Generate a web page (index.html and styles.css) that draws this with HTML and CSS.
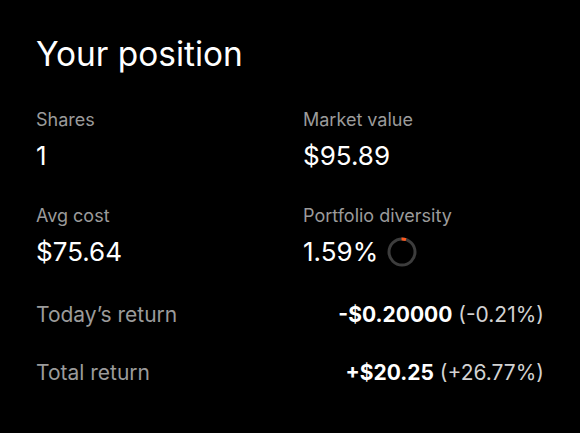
FILE: index.html
```html
<!DOCTYPE html>
<html>
<head>
<meta charset="utf-8">
<link rel="stylesheet" href="styles.css">
</head>
<body>
<section class="position">
  <h1 class="title">Your position</h1>
  <div class="grid">
    <div class="stat">
      <div class="label">Shares</div>
      <div class="value">1</div>
    </div>
    <div class="stat">
      <div class="label">Market value</div>
      <div class="value">$95.89</div>
    </div>
    <div class="stat">
      <div class="label">Avg cost</div>
      <div class="value">$75.64</div>
    </div>
    <div class="stat">
      <div class="label">Portfolio diversity</div>
      <div class="value with-ring">1.59%
        <svg class="ring" width="30" height="30" viewBox="0 0 30 30">
          <circle cx="15" cy="15" r="13" fill="none" stroke="#3d3d3d" stroke-width="3"/>
          <circle cx="15" cy="15" r="13" fill="none" stroke="#ff5a1f" stroke-width="3" stroke-dasharray="4.5 100" transform="rotate(-92 15 15)"/>
        </svg>
      </div>
    </div>
  </div>
  <div class="row">
    <span class="row-label">Today’s return</span>
    <span class="row-value"><b>-$0.20000</b> (-0.21%)</span>
  </div>
  <div class="row">
    <span class="row-label">Total return</span>
    <span class="row-value"><b>+$20.25</b> (+26.77%)</span>
  </div>
</section>
</body>
</html>
```
FILE: styles.css
```css
html, body {
  margin: 0;
  padding: 0;
  background: #000;
}
body {
  font-family: Inter, "Noto Sans", sans-serif;
  color: #fff;
}
.position {
  padding: 34px 36px 0 36px;
}
.title {
  margin: 0;
  font-size: 33.4px;
  font-weight: 400;
  line-height: 40px;
}
.grid {
  display: grid;
  grid-template-columns: 241px 1fr;
  column-gap: 26px;
  row-gap: 34px;
  margin-top: 35px;
}
.label {
  font-size: 18px;
  line-height: 22px;
  color: #9b9b9b;
}
.value {
  margin-top: 9px;
  font-size: 26px;
  line-height: 31px;
  color: #fff;
}
.with-ring {
  display: flex;
  align-items: center;
  gap: 9px;
}
.ring {
  display: block;
}
.row {
  display: flex;
  justify-content: space-between;
  line-height: 30px;
  margin-top: 33px;
  font-size: 21px;
}
.row + .row {
  margin-top: 28px;
}
.row-label {
  color: #9b9b9b;
}
.row-value {
  color: #d2d2d2;
}
.row-value b {
  color: #fff;
  font-weight: 700;
}
```
